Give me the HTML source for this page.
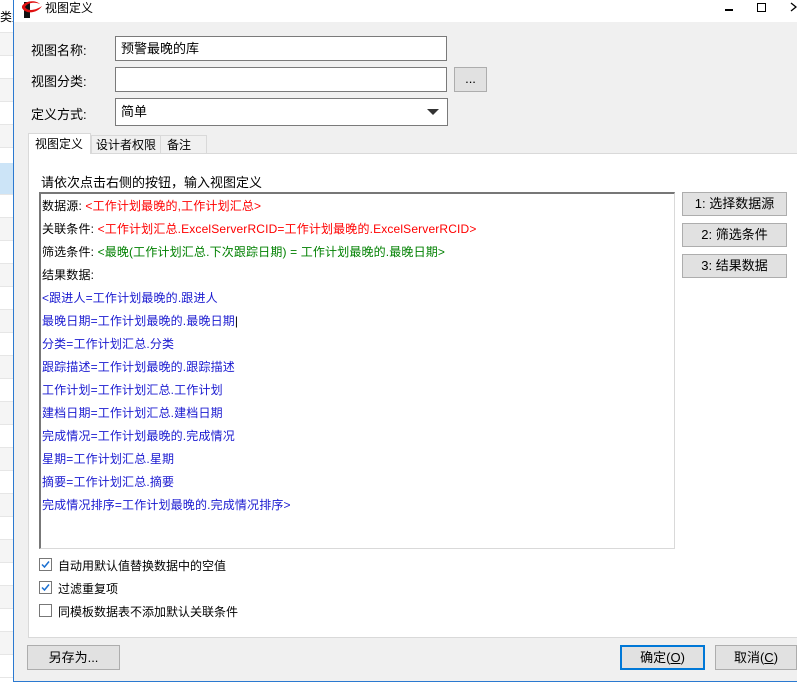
<!DOCTYPE html>
<html><head><meta charset="utf-8"><style>
*{margin:0;padding:0;box-sizing:border-box}
body{width:797px;height:689px;overflow:hidden;background:#fff;font-family:"Liberation Sans","Noto Sans CJK SC",sans-serif;font-size:12px;color:#000;position:relative}
.a{position:absolute}
.row{position:absolute;left:0;width:13px;height:23px;border-bottom:1px solid #e6e6e6}
.inp{position:absolute;background:#fff;border:1px solid #7a7a7a;padding-left:5px;line-height:23px;font-size:13px}
.btn{position:absolute;background:#e1e1e1;border:1px solid #adadad;text-align:center;font-size:13px}
.lbl{position:absolute;font-size:13px}
.ln{position:absolute;left:42px;font-size:12px;white-space:nowrap;letter-spacing:0.15px}
.r{color:#f00}.g{color:#008000}.b{color:#1a1ad0}
.cb{position:absolute;left:39px;width:13px;height:13px;border:1px solid #777;background:#fff}
</style></head><body>
<div class="a" style="left:0;top:0;width:13px;height:689px;background:#fff"></div>
<div class="a" style="left:0;top:8px;font-size:12px;width:13px;overflow:hidden;white-space:nowrap">类型</div>
<div class="row" style="top:10px"></div>
<div class="row" style="top:33px;background:#f5f5f5"></div>
<div class="row" style="top:56px"></div>
<div class="row" style="top:79px;background:#f5f5f5"></div>
<div class="row" style="top:102px"></div>
<div class="row" style="top:125px;background:#f5f5f5"></div>
<div class="row" style="top:148px"></div>
<div class="row" style="top:163px;height:32px;background:#cce4f7"></div>
<div class="row" style="top:195px"></div>
<div class="row" style="top:218px;background:#f5f5f5"></div>
<div class="row" style="top:241px"></div>
<div class="row" style="top:264px;background:#f5f5f5"></div>
<div class="row" style="top:287px"></div>
<div class="row" style="top:310px;background:#f5f5f5"></div>
<div class="row" style="top:333px"></div>
<div class="row" style="top:356px;background:#f5f5f5"></div>
<div class="row" style="top:379px"></div>
<div class="row" style="top:402px;background:#f5f5f5"></div>
<div class="row" style="top:425px"></div>
<div class="row" style="top:448px;background:#f5f5f5"></div>
<div class="row" style="top:471px"></div>
<div class="row" style="top:494px;background:#f5f5f5"></div>
<div class="row" style="top:517px"></div>
<div class="row" style="top:540px;background:#f5f5f5"></div>
<div class="row" style="top:563px"></div>
<div class="row" style="top:586px;background:#f5f5f5"></div>
<div class="row" style="top:609px"></div>
<div class="row" style="top:632px;background:#f5f5f5"></div>
<div class="row" style="top:655px"></div>

<div class="a" style="left:13px;top:0;width:784px;height:682px;border-left:1px solid #2b79d0;border-bottom:1px solid #2b79d0;background:#f0f0f0"></div>
<div class="a" style="left:14px;top:0;width:783px;height:22px;background:#fff"></div>
<svg class="a" style="left:20px;top:0" width="24" height="18" viewBox="0 0 24 18"><rect x="4" y="2" width="6" height="16" fill="#111"/><path d="M2 6 C6 0 16 0 20 4 C16 2 8 2 5 7 C8 12 16 10 22 6 C18 13 6 15 2 8Z" fill="#e01010"/></svg>
<div class="a" style="left:45px;top:0;font-size:12px;line-height:16px">视图定义</div>
<div class="a" style="left:725px;top:9px;width:8px;height:2px;background:#000"></div>
<div class="a" style="left:757px;top:3px;width:9px;height:9px;border:1.5px solid #000"></div>
<svg class="a" style="left:790px;top:2px" width="7" height="10"><path d="M1 1 L6 5 L1 9" stroke="#000" stroke-width="1.3" fill="none"/></svg>

<div class="lbl" style="left:31px;top:40px">视图名称:</div>
<div class="inp" style="left:115px;top:36px;width:332px;height:25px">预警最晚的库</div>
<div class="lbl" style="left:31px;top:71px">视图分类:</div>
<div class="inp" style="left:115px;top:67px;width:332px;height:25px"></div>
<div class="btn" style="left:454px;top:67px;width:33px;height:25px;line-height:22px">...</div>
<div class="lbl" style="left:31px;top:104px">定义方式:</div>
<div class="inp" style="left:115px;top:98px;width:333px;height:28px;line-height:26px">简单</div>
<div class="a" style="left:427px;top:109px;width:0;height:0;border-left:6px solid transparent;border-right:6px solid transparent;border-top:6px solid #333"></div>

<div class="a" style="left:28px;top:153px;width:769px;height:485px;background:#fff;border:1px solid #d9d9d9;border-right:none"></div>
<div class="a" style="left:91px;top:135px;width:70px;height:19px;border:1px solid #d9d9d9;background:#f0f0f0;font-size:12px;line-height:18px;padding-left:4px">设计者权限</div>
<div class="a" style="left:160px;top:135px;width:47px;height:19px;border:1px solid #d9d9d9;background:#f0f0f0;font-size:12px;line-height:18px;padding-left:6px">备注</div>
<div class="a" style="left:28px;top:133px;width:63px;height:21px;border:1px solid #d9d9d9;border-bottom:none;background:#fff;font-size:12px;line-height:20px;padding-left:6px">视图定义</div>

<div class="a" style="left:41px;top:172px;font-size:13px">请依次点击右侧的按钮，输入视图定义</div>
<div class="a" style="left:39px;top:192px;width:636px;height:357px;background:#fff;border:1px solid #d9d9d9;border-top:2px solid #777;border-left:2px solid #777"></div>
<div class="ln" style="top:197px">数据源: <span class="r">&lt;工作计划最晚的,工作计划汇总&gt;</span></div>
<div class="ln" style="top:220px">关联条件: <span class="r">&lt;工作计划汇总.ExcelServerRCID=工作计划最晚的.ExcelServerRCID&gt;</span></div>
<div class="ln" style="top:243px">筛选条件: <span class="g">&lt;最晚(工作计划汇总.下次跟踪日期) = 工作计划最晚的.最晚日期&gt;</span></div>
<div class="ln" style="top:266px">结果数据:</div>
<div class="ln b" style="top:289px">&lt;跟进人=工作计划最晚的.跟进人</div>
<div class="ln b" style="top:312px">最晚日期=工作计划最晚的.最晚日期<span style="color:#000">|</span></div>
<div class="ln b" style="top:335px">分类=工作计划汇总.分类</div>
<div class="ln b" style="top:358px">跟踪描述=工作计划最晚的.跟踪描述</div>
<div class="ln b" style="top:381px">工作计划=工作计划汇总.工作计划</div>
<div class="ln b" style="top:404px">建档日期=工作计划汇总.建档日期</div>
<div class="ln b" style="top:427px">完成情况=工作计划最晚的.完成情况</div>
<div class="ln b" style="top:450px">星期=工作计划汇总.星期</div>
<div class="ln b" style="top:473px">摘要=工作计划汇总.摘要</div>
<div class="ln b" style="top:496px">完成情况排序=工作计划最晚的.完成情况排序&gt;</div>

<div class="btn" style="left:682px;top:192px;width:105px;height:24px;line-height:22px">1: 选择数据源</div>
<div class="btn" style="left:682px;top:223px;width:105px;height:24px;line-height:22px">2: 筛选条件</div>
<div class="btn" style="left:682px;top:254px;width:105px;height:24px;line-height:22px">3: 结果数据</div>

<div class="cb" style="top:558px"><svg width="11" height="11" viewBox="0 0 11 11" style="position:absolute;left:0;top:0"><path d="M2 5.5 L4.5 8 L9 2.5" stroke="#1a6fd0" stroke-width="1.5" fill="none"/></svg></div>
<div class="a" style="left:58px;top:557px;font-size:12px">自动用默认值替换数据中的空值</div>
<div class="cb" style="top:581px"><svg width="11" height="11" viewBox="0 0 11 11" style="position:absolute;left:0;top:0"><path d="M2 5.5 L4.5 8 L9 2.5" stroke="#1a6fd0" stroke-width="1.5" fill="none"/></svg></div>
<div class="a" style="left:58px;top:580px;font-size:12px">过滤重复项</div>
<div class="cb" style="top:604px"></div>
<div class="a" style="left:58px;top:603px;font-size:12px">同模板数据表不添加默认关联条件</div>

<div class="btn" style="left:27px;top:645px;width:93px;height:25px;line-height:23px">另存为...</div>
<div class="btn" style="left:620px;top:645px;width:85px;height:25px;line-height:21px;border:2px solid #0078d7">确定(<u>O</u>)</div>
<div class="btn" style="left:715px;top:645px;width:82px;height:25px;line-height:23px">取消(<u>C</u>)</div>
</body></html>
